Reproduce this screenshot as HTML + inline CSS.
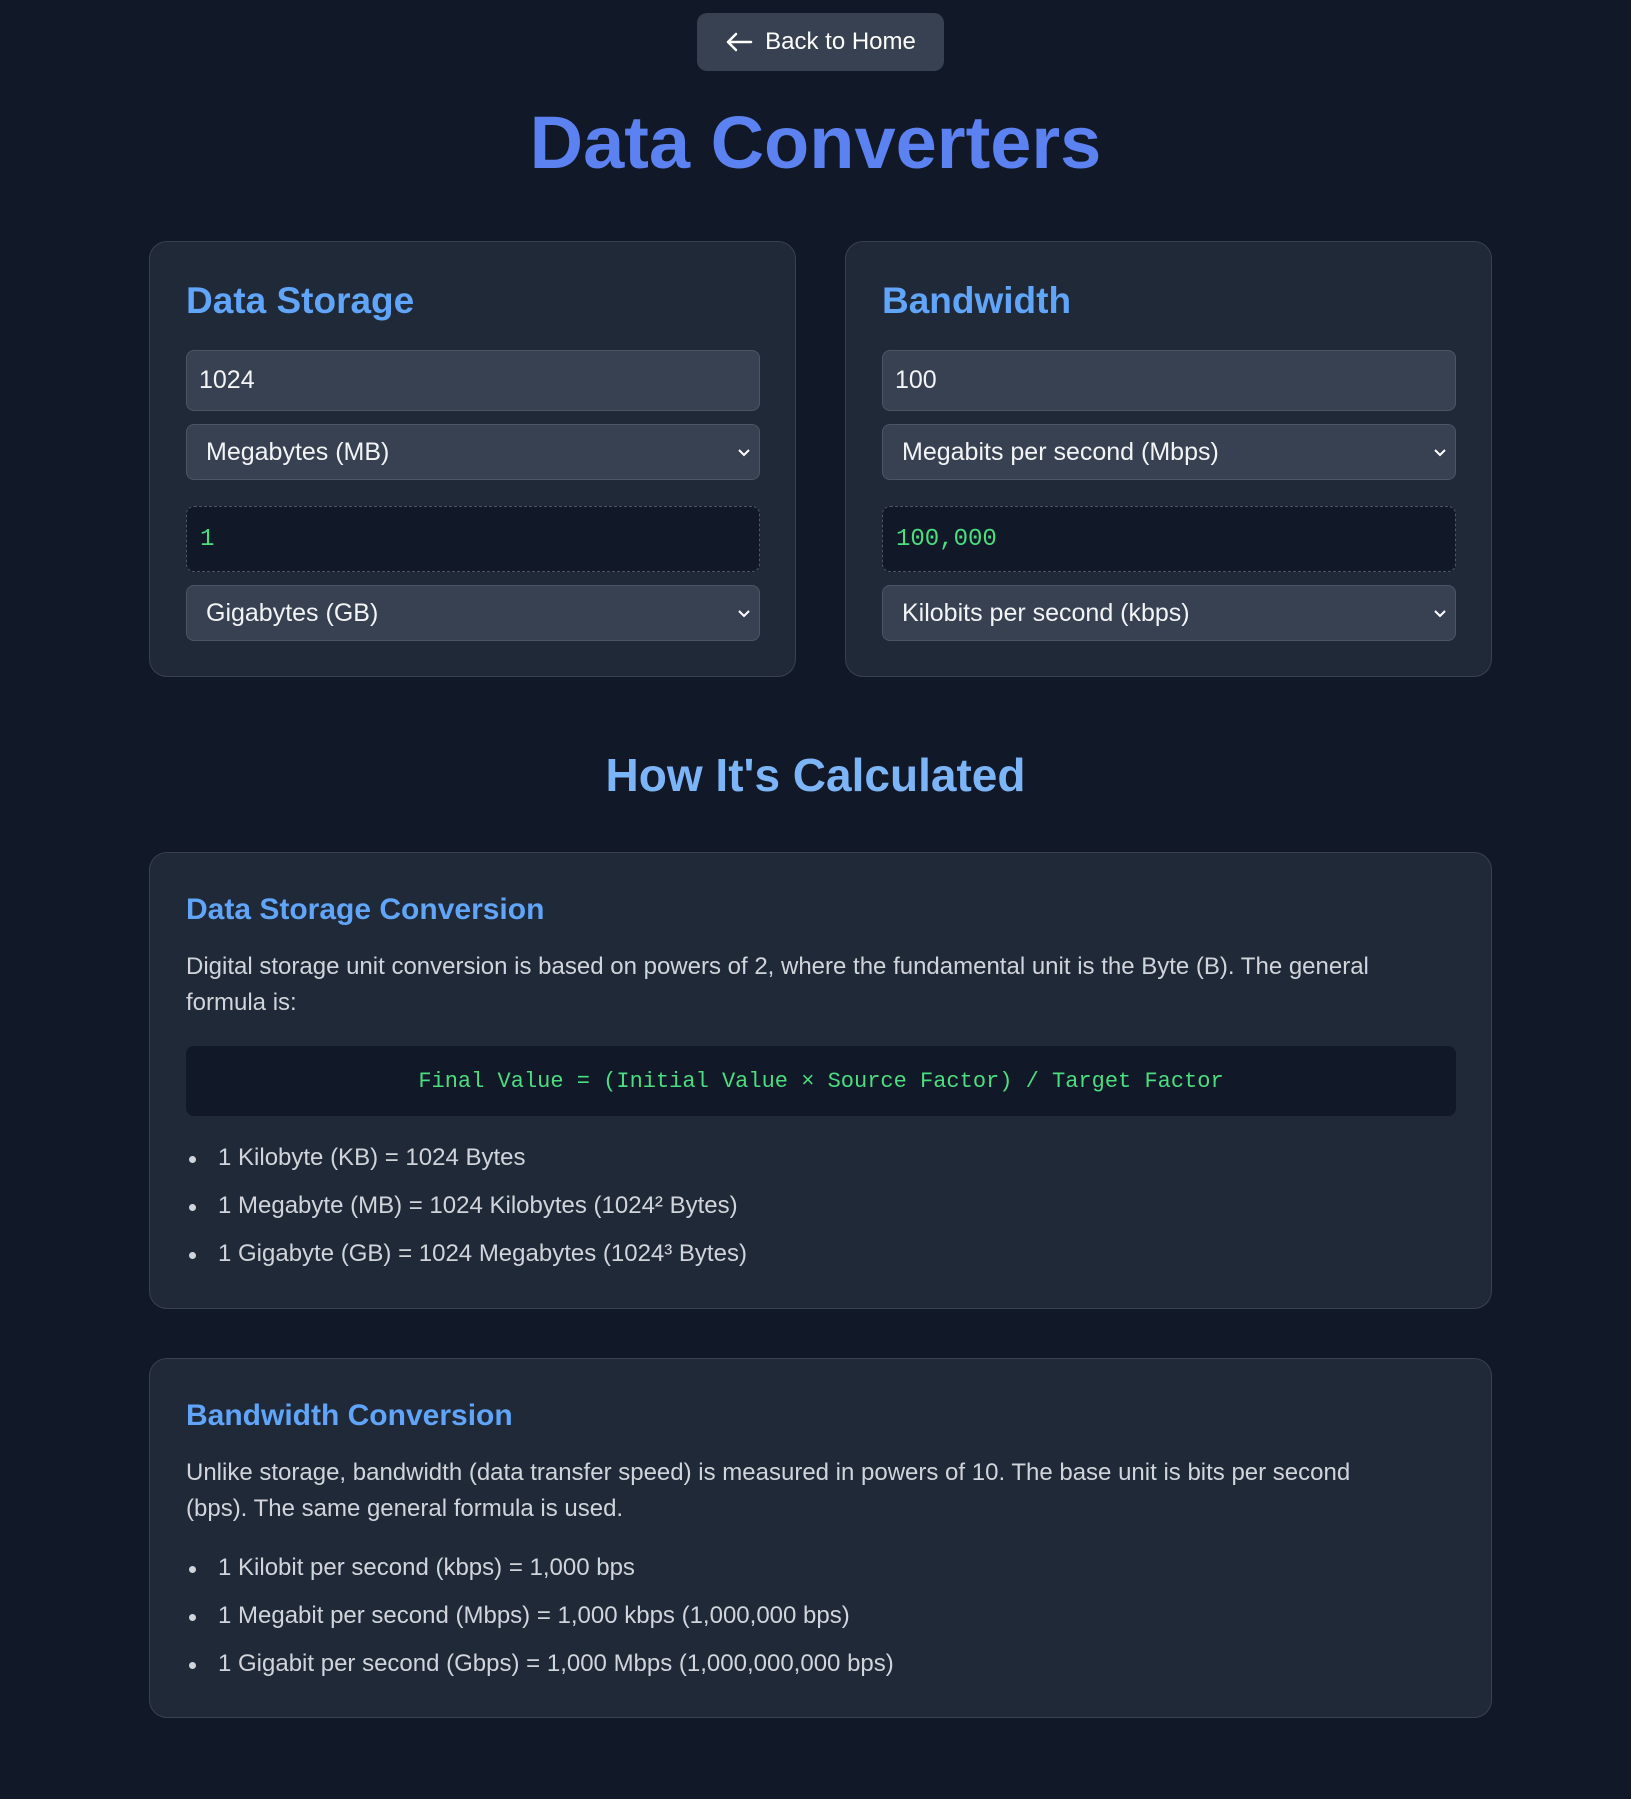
<!DOCTYPE html>
<html><head><meta charset="utf-8"><style>
*{box-sizing:border-box;margin:0;padding:0}
body{width:1631px;height:1799px;background:#111827;font-family:"Liberation Sans",sans-serif;color:#e5e7eb;position:relative;overflow:hidden}
.a{position:absolute}
.btn{left:697px;top:13px;width:247px;height:58px;background:#374151;border-radius:10px;color:#fff;font-size:24px;display:flex;align-items:center;justify-content:center;gap:12px}
h1{position:absolute;left:0;width:1631px;top:100px;text-align:center;font-size:74px;font-weight:bold;color:#5b82f0;letter-spacing:0px}
.card{position:absolute;background:#1f2937;border:1px solid #374151;border-radius:18px}
.card h2{position:absolute;left:36px;top:38px;font-size:37px;font-weight:bold;color:#60a5fa}
.inp{position:absolute;left:36px;width:574px;background:#374151;border:1px solid #4b5563;border-radius:8px;font-size:25px;color:#f3f4f6;display:flex;align-items:center}
.res{position:absolute;left:36px;width:574px;height:66px;top:264px;background:#111827;border:1px dashed #4b5563;border-radius:8px;font-family:"Liberation Mono",monospace;font-size:24px;color:#4ade80;display:flex;align-items:center;padding-left:13px}
.chev{position:absolute;right:8px;top:50%;margin-top:-5px}
h3{position:absolute;font-size:30px;font-weight:bold;color:#60a5fa}
p{position:absolute;font-size:24px;line-height:36px;color:#d1d5db}
ul{position:absolute;list-style:none;font-size:24px;color:#d1d5db}
li{position:relative;height:48px;line-height:48px;padding-left:32px}
li:before{content:"";position:absolute;left:3px;top:22px;width:7px;height:7px;border-radius:50%;background:#d1d5db}
</style></head><body>
<div class="a btn"><svg width="28" height="22" viewBox="0 0 28 22"><path d="M26 11H3M11 3L3 11L11 19" stroke="#fff" stroke-width="2.5" fill="none" stroke-linecap="round" stroke-linejoin="round"/></svg>Back to Home</div>
<h1>Data Converters</h1>

<div class="card" style="left:149px;top:241px;width:647px;height:436px">
<h2>Data Storage</h2>
<div class="inp" style="top:108px;height:61px;padding-left:12px">1024</div>
<div class="inp" style="top:182px;height:56px;padding-left:19px">Megabytes (MB)<svg class="chev" width="14" height="10" viewBox="0 0 14 10"><path d="M2 3L7 8L12 3" stroke="#fff" stroke-width="2" fill="none"/></svg></div>
<div class="res">1</div>
<div class="inp" style="top:343px;height:56px;padding-left:19px">Gigabytes (GB)<svg class="chev" width="14" height="10" viewBox="0 0 14 10"><path d="M2 3L7 8L12 3" stroke="#fff" stroke-width="2" fill="none"/></svg></div>
</div>

<div class="card" style="left:845px;top:241px;width:647px;height:436px">
<h2>Bandwidth</h2>
<div class="inp" style="top:108px;height:61px;padding-left:12px">100</div>
<div class="inp" style="top:182px;height:56px;padding-left:19px">Megabits per second (Mbps)<svg class="chev" width="14" height="10" viewBox="0 0 14 10"><path d="M2 3L7 8L12 3" stroke="#fff" stroke-width="2" fill="none"/></svg></div>
<div class="res">100,000</div>
<div class="inp" style="top:343px;height:56px;padding-left:19px">Kilobits per second (kbps)<svg class="chev" width="14" height="10" viewBox="0 0 14 10"><path d="M2 3L7 8L12 3" stroke="#fff" stroke-width="2" fill="none"/></svg></div>
</div>

<div class="a" style="left:0;width:1631px;top:748px;text-align:center;font-size:46px;font-weight:bold;color:#7cb5f7">How It's Calculated</div>

<div class="card" style="left:149px;top:852px;width:1343px;height:457px">
<h3 style="left:36px;top:40px">Data Storage Conversion</h3>
<p style="left:36px;top:96px;width:1190px">Digital storage unit conversion is based on powers of 2, where the fundamental unit is the Byte (B). The general formula is:</p>
<div class="a" style="left:36px;top:193px;width:1270px;height:70px;background:#111827;border-radius:8px;font-family:'Liberation Mono',monospace;font-size:22px;color:#4ade80;display:flex;align-items:center;justify-content:center">Final Value = (Initial Value × Source Factor) / Target Factor</div>
<ul style="left:36px;top:281px"><li>1 Kilobyte (KB) = 1024 Bytes</li><li>1 Megabyte (MB) = 1024 Kilobytes (1024² Bytes)</li><li>1 Gigabyte (GB) = 1024 Megabytes (1024³ Bytes)</li></ul>
</div>

<div class="card" style="left:149px;top:1358px;width:1343px;height:360px">
<h3 style="left:36px;top:40px">Bandwidth Conversion</h3>
<p style="left:36px;top:96px;width:1190px">Unlike storage, bandwidth (data transfer speed) is measured in powers of 10. The base unit is bits per second (bps). The same general formula is used.</p>
<ul style="left:36px;top:185px"><li>1 Kilobit per second (kbps) = 1,000 bps</li><li>1 Megabit per second (Mbps) = 1,000 kbps (1,000,000 bps)</li><li>1 Gigabit per second (Gbps) = 1,000 Mbps (1,000,000,000 bps)</li></ul>
</div>
</body></html>
